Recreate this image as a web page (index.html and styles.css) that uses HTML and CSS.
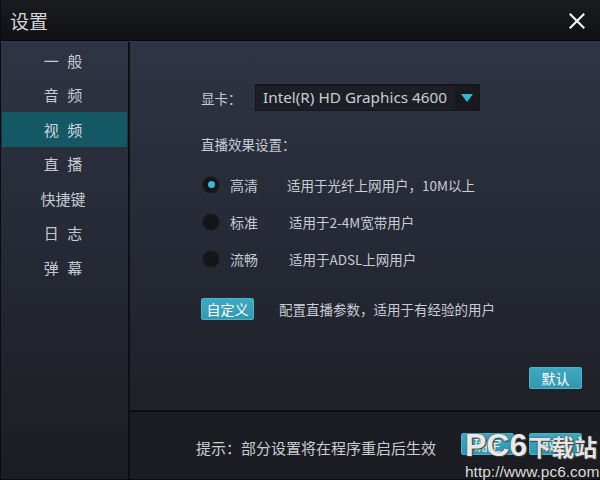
FILE: index.html
```html
<!DOCTYPE html>
<html lang="zh-CN">
<head>
<meta charset="utf-8">
<title>设置</title>
<link rel="stylesheet" href="styles.css">
</head>
<body>
<div class="window">
  <header class="titlebar">
    <span class="title">设置</span>
    <svg class="close" width="16" height="16" viewBox="0 0 16 16"><path d="M1.5 1.5L14.5 14.5M14.5 1.5L1.5 14.5" stroke="#f2f2f2" stroke-width="2.2" stroke-linecap="square" fill="none"/></svg>
  </header>
  <div class="body">
    <nav class="sidebar">
      <div class="nav-item">一 般</div>
      <div class="nav-item">音 频</div>
      <div class="nav-item active">视 频</div>
      <div class="nav-item">直 播</div>
      <div class="nav-item">快捷键</div>
      <div class="nav-item">日 志</div>
      <div class="nav-item">弹 幕</div>
    </nav>
    <main class="content">
      <section class="settings">
        <div class="gpu-row">
          <span class="gpu-label">显卡：</span>
          <div class="select">
            <span class="select-text">Intel(R) HD Graphics 4600</span>
            <span class="select-btn"><svg width="12" height="8" viewBox="0 0 12 8"><path d="M0 0H12L6 8Z" fill="#3ab3cf"/></svg></span>
          </div>
        </div>
        <div class="section-title">直播效果设置：</div>
        <div class="radio-row">
          <span class="radio checked"></span>
          <span class="radio-label">高清</span>
          <span class="radio-desc">适用于光纤上网用户，10M以上</span>
        </div>
        <div class="radio-row">
          <span class="radio"></span>
          <span class="radio-label">标准</span>
          <span class="radio-desc shift">适用于2-4M宽带用户</span>
        </div>
        <div class="radio-row">
          <span class="radio"></span>
          <span class="radio-label">流畅</span>
          <span class="radio-desc shift">适用于ADSL上网用户</span>
        </div>
        <div class="custom-row">
          <button class="btn">自定义</button>
          <span class="custom-desc">配置直播参数，适用于有经验的用户</span>
        </div>
        <div class="default-row">
          <button class="btn">默认</button>
        </div>
      </section>
      <footer class="footer">
        <span class="hint">提示：部分设置将在程序重启后生效</span>
        <button class="btn">确定</button>
        <button class="btn">取消</button>
      </footer>
    </main>
  </div>
  <div class="watermark">
    <div class="wm-big"><span class="wm-latin">PC6</span><span class="wm-cjk">下载站</span></div>
    <div class="wm-url">http://www.pc6.com</div>
  </div>
</div>
</body>
</html>
```

FILE: styles.css
```css
* { box-sizing: border-box; margin: 0; padding: 0; }
html, body { width: 600px; height: 480px; overflow: hidden; background: #1c1d22; }
body { font-family: "Noto Sans CJK SC", "Noto Sans", sans-serif; color: #c9cdd5; }

.window {
  position: relative;
  width: 600px;
  height: 480px;
  display: flex;
  flex-direction: column;
  border-left: 1px solid #0b0c0e;
  border-bottom: 1px solid #0b0c0e;
}

.titlebar {
  height: 41px;
  flex: none;
  display: flex;
  align-items: center;
  justify-content: space-between;
  padding: 0 15px 0 9px;
  background: linear-gradient(#1b1c20, #0f1013);
  border-bottom: 1px solid #08090b;
}
.title { font-size: 19px; color: #d6d7da; line-height: 1; }
.close { display: block; margin-top: 1px; }

.body {
  flex: 1;
  display: flex;
  background: linear-gradient(#2f3444 0%, #262a36 45%, #1c1d23 100%);
  border-top: 1px solid #34394a;
}

.sidebar {
  width: 129px;
  flex: none;
  padding: 1px 1px 0 1px;
  border-right: 2px solid #0e0f13;
}
.nav-item {
  height: 34.5px;
  display: flex;
  align-items: center;
  justify-content: center;
  font-size: 15px;
  word-spacing: 5px;
  color: #c6cad2;
  padding-right: 3px;
}
.nav-item.active { background: #145866; color: #d2d6dc; }

.content { flex: 1; display: flex; flex-direction: column; }

.settings {
  flex: 1;
  padding: 42px 18px 0 71px;
  display: flex;
  flex-direction: column;
  font-size: 13.5px;
}

.gpu-row { display: flex; align-items: center; height: 27px; }
.gpu-label { width: 54px; font-size: 13.5px; color: #c9cdd5; }
.select {
  width: 225px;
  height: 27px;
  display: flex;
  background: #1d1f27;
  border: 1px solid #15161b;
  box-shadow: inset 0 1px 0 #14151a;
}
.select-text {
  flex: 1;
  font-family: "Noto Sans", sans-serif;
  font-size: 15.3px;
  line-height: 25px;
  padding-left: 7px;
  color: #c9cdd5;
}
.select-btn {
  width: 24px;
  display: flex;
  align-items: center;
  justify-content: center;
  background: #17191f;
}

.section-title { margin-top: 23px; line-height: 20px; font-size: 13.5px; }

.radio-row { display: flex; align-items: center; height: 37px; }
.section-title + .radio-row { margin-top: 12px; }
.radio {
  width: 18px;
  height: 18px;
  border-radius: 50%;
  background: #15161a;
  border: 1px solid #23252d;
  display: flex;
  align-items: center;
  justify-content: center;
  margin-left: 1px;
}
.radio.checked::after {
  content: "";
  width: 7px;
  height: 7px;
  border-radius: 50%;
  background: #3cb6d2;
}
.radio-label { margin-left: 10px; width: 57px; font-size: 14px; color: #c6cad2; }
.radio-desc { font-size: 13.5px; color: #c9cdd5; }
.radio-desc.shift { margin-left: 2px; }

.custom-row { display: flex; align-items: center; margin-top: 21px; }
.custom-desc { margin-left: 25px; font-size: 13.5px; }

.btn {
  width: 53px;
  height: 22px;
  border: 1px solid #4bb3c9;
  border-radius: 2px;
  background: linear-gradient(#3ea9c1, #3597ae);
  color: #ffffff;
  font-family: "Noto Sans CJK SC", sans-serif;
  font-size: 14px;
  line-height: 20px;
  display: flex;
  align-items: center;
  justify-content: center;
}
.default-row { display: flex; justify-content: flex-end; margin-top: 47px; }

.footer {
  height: 69px;
  flex: none;
  display: flex;
  align-items: center;
  gap: 15px;
  padding: 0 18px 0 66px;
  background: #1c1d22;
  border-top: 2px solid #0c0d10;
}
.footer .btn { margin-bottom: 3px; }
.hint { font-size: 15px; margin-right: auto; color: #c9cdd5; margin-top: 4px; }

.watermark {
  position: absolute;
  left: 464px;
  top: 427px;
  width: 140px;
  pointer-events: none;
}
.wm-big { display: flex; align-items: baseline; line-height: 36px; white-space: nowrap; }
.wm-latin {
  font-family: "Liberation Sans", sans-serif;
  font-weight: bold;
  font-size: 32px;
  color: #e9e9e9;
  text-shadow: 0 0 2px #3a3a3a, 1px 1px 1px #444;
}
.wm-cjk {
  font-family: "Noto Sans CJK SC", sans-serif;
  font-weight: bold;
  font-size: 23px;
  margin-left: 1px;
  color: #e4e4e4;
  text-shadow: 0 0 2px #3a3a3a, 1px 1px 1px #444;
}
.wm-url {
  font-family: "Liberation Sans", sans-serif;
  font-size: 15.5px;
  line-height: 15px;
  color: #dedede;
  text-shadow: 0 0 2px #222, 0 0 1px #000;
  white-space: nowrap;
}
```
